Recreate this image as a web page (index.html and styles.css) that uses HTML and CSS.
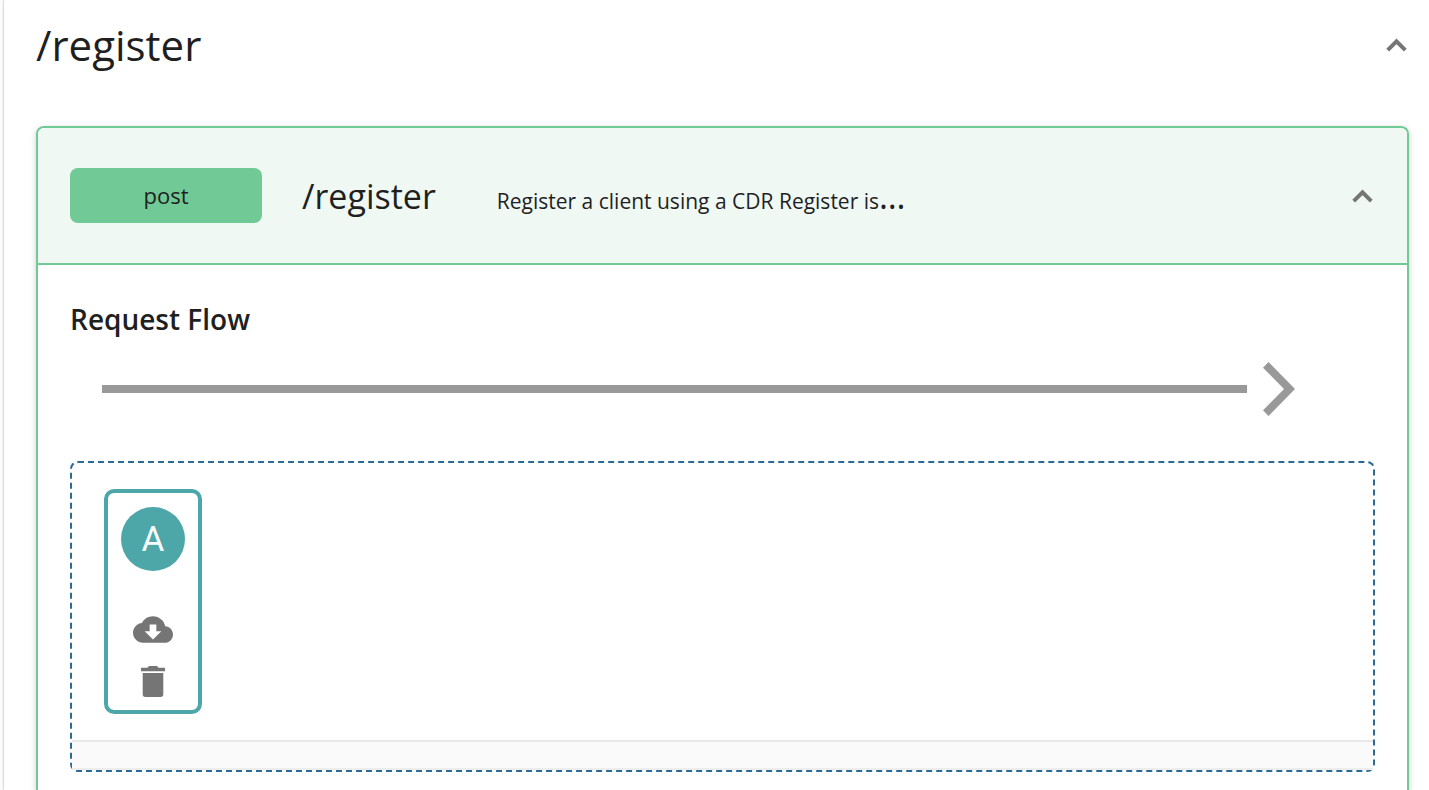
FILE: index.html
```html
<!DOCTYPE html>
<html lang="en">
<head>
<meta charset="utf-8">
<title>/register</title>
<meta name="viewport" content="width=device-width, initial-scale=1">
<link rel="stylesheet" href="styles.css">
</head>
<body>
<main class="panel">
  <header class="panel-header">
    <h1 class="panel-title">/register</h1>
    <button class="icon-button" type="button" aria-label="Collapse path" aria-expanded="true">
      <svg class="chevron" viewBox="0 0 22 14" aria-hidden="true"><path d="M1.700 12.2 10.500 3.4l8.8 8.8" /></svg>
    </button>
  </header>
  <section class="operation">
    <header class="operation-header">
      <span class="method">post</span>
      <div class="operation-text">
        <h2 class="operation-path">/register</h2>
        <p class="summary">Register a client using a CDR Register is<span class="more">…</span></p>
      </div>
      <button class="icon-button" type="button" aria-label="Collapse operation" aria-expanded="true">
        <svg class="chevron" viewBox="0 0 22 14" aria-hidden="true"><path d="M1.700 12.2 10.500 3.4l8.8 8.8" /></svg>
      </button>
    </header>
    <div class="operation-body">
      <h3 class="flow-title">Request Flow</h3>
      <div class="flow-arrow">
        <div class="flow-line"></div>
        <svg class="flow-head" viewBox="0 0 32 54" aria-hidden="true"><path d="M5.5 0 32 27 5.5 54 0 48.3 21 27 0 5.7z" /></svg>
      </div>
      <div class="flow">
        <div class="policies">
          <article class="policy">
            <div class="avatar">A</div>
            <div class="actions">
              <button class="action" type="button" aria-label="Download policy">
                <svg class="cloud" viewBox="0 4 24 16" aria-hidden="true"><path d="M19.35 10.04C18.67 6.59 15.64 4 12 4 9.11 4 6.6 5.64 5.35 8.04 2.34 8.36 0 10.91 0 14c0 3.31 2.69 6 6 6h13c2.76 0 5-2.24 5-5 0-2.64-2.05-4.78-4.65-4.96zM17 13l-5 5-5-5h3V9h4v4h3z" /></svg>
              </button>
              <button class="action" type="button" aria-label="Delete policy">
                <svg class="trash" viewBox="0 0 24 31" aria-hidden="true"><path d="M1.700 7h20.600v21.300Q22.300 31 19.600 31H4.400Q1.700 31 1.700 28.300zM0 1.700h6.500L8 0h8l1.500 1.700H24v3.500H0z" /></svg>
              </button>
            </div>
          </article>
        </div>
        <div class="scroll-track"></div>
      </div>
    </div>
  </section>
</main>
</body>
</html>
```
FILE: styles.css
```css
* { box-sizing: border-box; }

body {
  margin: 0;
  padding-left: 4px;
  background: #fcfcfc;
  color: #1f1f1f;
  font-family: "Open Sans", "Noto Sans", sans-serif;
}

h1, h2, h3, p { margin: 0; font-weight: 400; }

button {
  display: flex;
  align-items: center;
  justify-content: center;
  padding: 0;
  border: 0;
  background: none;
  cursor: pointer;
}

svg { display: block; }

.panel {
  display: flex;
  flex-direction: column;
  min-height: 100vh;
  padding: 0 20px 0 31px;
  background: #fff;
  border-left: 1px solid #fff;
  box-shadow: 0 0 2px rgba(0, 0, 0, 0.4);
}

.panel-header {
  display: flex;
  align-items: center;
  justify-content: space-between;
  padding: 17px 0;
  margin-bottom: 36px;
}

.panel-title { font-size: 42px; line-height: 56px; }

.icon-button { width: 24px; height: 24px; }

.chevron {
  width: 22px;
  height: 14px;
  fill: none;
  stroke: #757575;
  stroke-width: 4;
}

.operation {
  flex: 1;
  border: 2px solid #71c995;
  border-bottom: 0;
  border-radius: 8px 8px 0 0;
  box-shadow: 0 2px 6px rgba(0, 0, 0, 0.2);
}

.operation-header {
  display: flex;
  align-items: center;
  padding: 40px 32px;
  border-bottom: 2px solid #71c995;
  border-radius: 6px 6px 0 0;
  background: #eff8f3;
}

.operation-header .icon-button { margin-left: auto; }

.method {
  width: 192px;
  margin-right: 40px;
  border-radius: 8px;
  background: #71c995;
  font-size: 22px;
  line-height: 55px;
  text-align: center;
}

.operation-text {
  display: flex;
  align-items: baseline;
  gap: 61px;
}

.operation-path { font-size: 34px; line-height: 48px; }

.summary { font-size: 21px; line-height: 32px; }

.more { font-size: 34px; line-height: 1; }

.operation-body { padding: 32px 32px 0; }

.flow-title { font-size: 28px; font-weight: 600; line-height: 44px; }

.flow-arrow {
  display: flex;
  align-items: center;
  gap: 16px;
  padding: 21px 80px 45px 32px;
}

.flow-line { flex: 1; height: 8px; background: #999; }

.flow-head { width: 32px; height: 54px; fill: #999; }

.flow { border: 2px dashed #2a6a97; border-radius: 8px; }

.policies { display: flex; padding: 26px 32px; }

.policy {
  display: flex;
  flex-direction: column;
  align-items: center;
  width: 98px;
  padding: 14px 0 5px;
  border: 4px solid #4da7a9;
  border-radius: 10px;
}

.avatar {
  width: 64px;
  height: 64px;
  border-radius: 50%;
  background: #4da7a9;
  color: #fafafa;
  font-family: Roboto, sans-serif;
  font-size: 35px;
  line-height: 66px;
  text-align: center;
}

.actions { display: grid; gap: 4px; padding-top: 34px; }

.action { width: 48px; height: 48px; }

.cloud { width: 40px; height: 27px; fill: #757575; }

.trash { width: 24px; height: 31px; fill: #757575; }

.scroll-track {
  height: 30px;
  border-top: 2px solid #e8e8e8;
  border-bottom: 2px solid #ededed;
  background: #fafafa;
}
```
